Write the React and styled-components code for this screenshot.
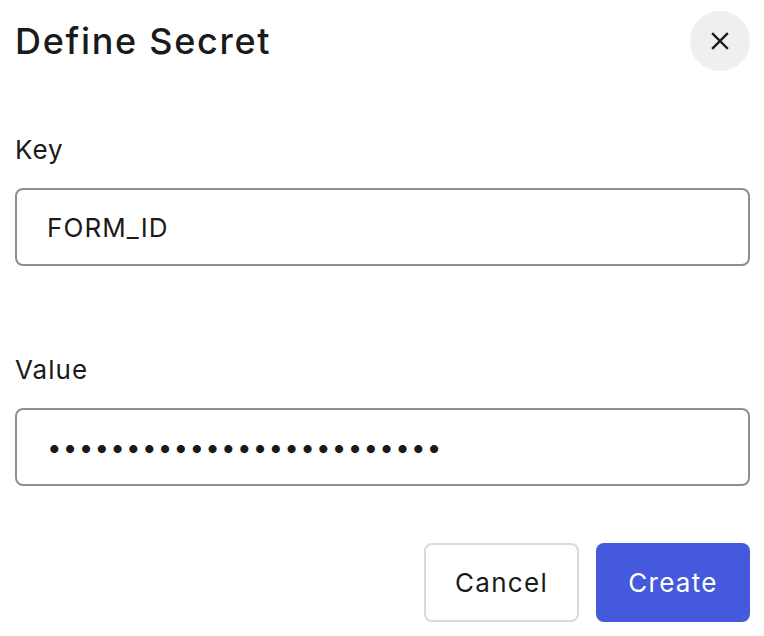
import React from "react";
import styled, { createGlobalStyle } from "styled-components";

const Global = createGlobalStyle`
  html, body { margin: 0; padding: 0; background: #ffffff; }
  body { font-family: Inter, "Noto Sans", sans-serif; color: #1a1a1a; }
  * { box-sizing: border-box; }
`;

const Dialog = styled.div`
  width: 764px;
  height: 636px;
  padding: 11px 14px 0 15px;
  display: flex;
  flex-direction: column;
`;

const Header = styled.div`
  display: flex;
  align-items: center;
  justify-content: space-between;
  height: 60px;
`;

const Title = styled.h1`
  margin: 0;
  font-size: 36px;
  font-weight: 500;
  letter-spacing: 1.7px;
  color: #1a1a1a;
`;

const CloseButton = styled.button`
  width: 60px;
  height: 60px;
  border-radius: 50%;
  border: none;
  background: #efefef;
  display: flex;
  align-items: center;
  justify-content: center;
  padding: 0;
  cursor: pointer;
`;

const Field = styled.div`
  display: flex;
  flex-direction: column;
  gap: 23px;
  margin-top: ${(p) => p.$top}px;
`;

const Label = styled.label`
  font-size: 26px;
  font-weight: 400;
  line-height: 31px;
  letter-spacing: 1px;
  color: #1a1a1a;
`;

const Input = styled.input`
  width: 100%;
  height: 78px;
  border: 2px solid #8f8f8f;
  border-radius: 8px;
  padding: 0 30px;
  font-family: Inter, "Noto Sans", sans-serif;
  font-size: 26px;
  color: #1a1a1a;
  outline: none;
  background: #fff;
  letter-spacing: ${(p) => (p.type === "password" ? "1.2px" : "1.1px")};
`;

const Footer = styled.div`
  display: flex;
  justify-content: flex-end;
  gap: 17px;
  margin-top: 57px;
`;

const Button = styled.button`
  height: 79px;
  width: ${(p) => p.$w}px;
  border-radius: 8px;
  font-family: Inter, "Noto Sans", sans-serif;
  font-size: 26px;
  font-weight: 400;
  letter-spacing: 1.3px;
  cursor: pointer;
  border: ${(p) => (p.$primary ? "none" : "2px solid #dadada")};
  background: ${(p) => (p.$primary ? "#4459dc" : "#ffffff")};
  color: ${(p) => (p.$primary ? "#ffffff" : "#1a1a1a")};
`;

export default function App() {
  return (
    <>
      <Global />
      <Dialog>
        <Header>
          <Title>Define Secret</Title>
          <CloseButton aria-label="Close">
            <svg width="20" height="20" viewBox="0 0 20 20" fill="none">
              <path d="M3 3 L17 17 M17 3 L3 17" stroke="#1a1a1a" strokeWidth="2.4" strokeLinecap="square" />
            </svg>
          </CloseButton>
        </Header>
        <Field $top={63}>
          <Label>Key</Label>
          <Input type="text" defaultValue="FORM_ID" />
        </Field>
        <Field $top={88}>
          <Label>Value</Label>
          <Input type="password" defaultValue="abcdefghijklmnopqrstuvwxy" />
        </Field>
        <Footer>
          <Button $w={155}>Cancel</Button>
          <Button $w={154} $primary>Create</Button>
        </Footer>
      </Dialog>
    </>
  );
}
